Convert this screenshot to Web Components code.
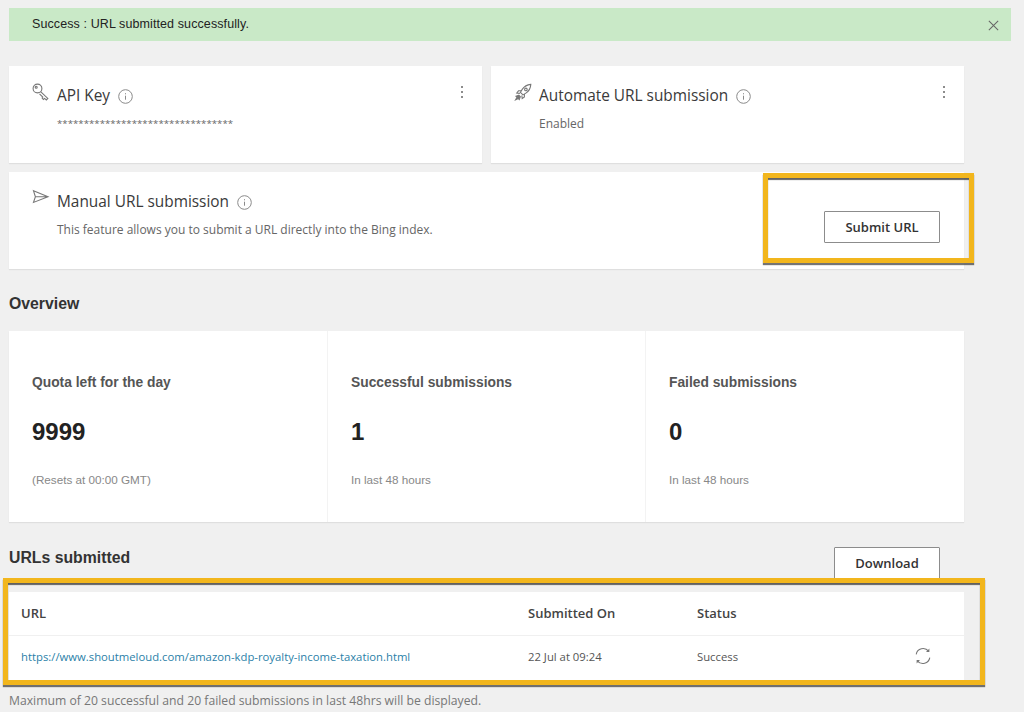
<!DOCTYPE html>
<html lang="en">
<head>
<meta charset="utf-8">
<title>Submit URLs</title>
<style>
  html, body { margin: 0; height: 712px; overflow: hidden; background: #f0f0f0; }
  body { font-family: 'Open Sans', 'Liberation Sans', sans-serif; color: #333; }
  a { color: #2b7fa8; text-decoration: none; }
</style>
</head>
<body>
<submit-page>
  <success-banner>Success : URL submitted successfully.</success-banner>

  <div slot="cards" style="display:grid;grid-template-columns:473px 473px;gap:9px;">
    <tool-card heading="API Key" icon="key" menu>
      <span style="font-size:9.7px;line-height:14px;display:block;padding-top:1px;">*********************************</span>
    </tool-card>
    <tool-card heading="Automate URL submission" icon="rocket" menu>Enabled</tool-card>
  </div>

  <tool-card slot="manual" heading="Manual URL submission" icon="send">
    This feature allows you to submit a URL directly into the Bing index.
    <plain-button slot="action">Submit URL</plain-button>
    <call-out slot="action" style="left:754px;top:1px;width:211px;height:90px;"></call-out>
  </tool-card>

  <section-title slot="overview">Overview</section-title>
  <stat-strip slot="overview">
    <stat-panel label="Quota left for the day" value="9999" note="(Resets at 00:00 GMT)"></stat-panel>
    <stat-panel label="Successful submissions" value="1" note="In last 48 hours"></stat-panel>
    <stat-panel label="Failed submissions" value="0" note="In last 48 hours"></stat-panel>
  </stat-strip>

  <url-table slot="urls">
    <section-title slot="title">URLs submitted</section-title>
    <plain-button slot="tools" tab>Download</plain-button>
    <url-row head>
      <span>URL</span><span>Submitted On</span><span>Status</span><span></span>
    </url-row>
    <url-row>
      <a href="#">https://www.shoutmeloud.com/amazon-kdp-royalty-income-taxation.html</a>
      <span>22 Jul at 09:24</span>
      <span>Success</span>
      <line-icon name="refresh" size="20"></line-icon>
    </url-row>
    <call-out slot="over" style="left:-6px;top:56px;width:982px;height:107px;"></call-out>
    <span slot="foot">Maximum of 20 successful and 20 failed submissions in last 48hrs will be displayed.</span>
  </url-table>
</submit-page>

<script>
const ICONS = {
  key: '<circle cx="5.5" cy="5.5" r="4.4"/><circle cx="4.2" cy="4.2" r="1"/><path d="M8.6 8.6l7.2 6.8-1.5 1.5-1.7-1.5-1.2 1-1.3-1.4.7-1-3.300-3.200"/>',
  rocket: '<path d="M16.8 1.4c-3.600.3-6.600 2-8.600 5L6.400 9.300l2.600 2.600 2.900-1.800c3-1.900 4.700-4.900 4.900-8.700z"/><circle cx="11.900" cy="6.400" r="1.300"/><path d="M7.400 7.800H4.500L2.800 10l3.100.4M10.400 11v2.900l-2.200 1.700-.4-3.100"/><path d="M4.800 12.200l-2.800 1.100 1 1-1.400 2.500 2.700-1.300 1 1 1-2.800z" fill="currentColor"/>',
  send: '<path d="M1.500 1.800L16 7.800 1.500 13.400 3.400 7.800zM3.400 7.800H16"/>',
  refresh: '<path d="M3.200 8.300A7 7 0 0 1 15.600 5.200"/><path d="M16.800 11.700A7 7 0 0 1 4.400 14.800"/><path d="M16.400 2.400v3.500h-3.400z" fill="currentColor" stroke="none"/><path d="M3.600 17.600v-3.500H7z" fill="currentColor" stroke="none"/>',
  close: '<path d="M2 2l10 10M12 2L2 12"/>'
};

class LineIcon extends HTMLElement {
  static get observedAttributes() { return ['name']; }
  constructor() {
    super();
    this.attachShadow({ mode: 'open' });
  }
  attributeChangedCallback() {
    const name = this.getAttribute('name');
    const size = this.getAttribute('size') || 18;
    const box = name == 'refresh' ? 20 : name == 'close' ? 14 : 18;
    this.shadowRoot.innerHTML = `
      <style>
        :host { display: inline-flex; color: #777; }
        svg { display: block; fill: none; stroke: currentColor; stroke-width: 1.1; }
      </style>
      <svg width="${size}" height="${size}" viewBox="0 0 ${box} ${box}">${ICONS[name]}</svg>`;
  }
}
customElements.define('line-icon', LineIcon);

const infoTemplate = document.createElement('template');
infoTemplate.innerHTML = `
  <style>
    :host { display: inline-flex; width: 15px; height: 15px; }
    svg { display: block; }
  </style>
  <svg width="15" height="15" viewBox="0 0 15 15" fill="none" stroke="#8a8a8a" stroke-width="1">
    <circle cx="7.5" cy="7.5" r="6.8"/>
    <path d="M7.5 6.7v4"/>
    <path d="M7.5 4.2v1.100"/>
  </svg>`;

class InfoMark extends HTMLElement {
  constructor() {
    super();
    this.attachShadow({ mode: 'open' }).appendChild(infoTemplate.content.cloneNode(true));
  }
}
customElements.define('info-mark', InfoMark);

const pageTemplate = document.createElement('template');
pageTemplate.innerHTML = `
  <style>
    :host { display: block; padding: 8px 13px 0 9px; }
    .content { padding-right: 47px; }
    .cards { margin-top: 25px; }
    .manual { margin-top: 9px; }
  </style>
  <slot></slot>
  <div class="content">
    <div class="cards"><slot name="cards"></slot></div>
    <div class="manual"><slot name="manual"></slot></div>
    <slot name="overview"></slot>
    <slot name="urls"></slot>
  </div>`;

class SubmitPage extends HTMLElement {
  constructor() {
    super();
    this.attachShadow({ mode: 'open' }).appendChild(pageTemplate.content.cloneNode(true));
  }
}
customElements.define('submit-page', SubmitPage);

const bannerTemplate = document.createElement('template');
bannerTemplate.innerHTML = `
  <style>
    :host {
      display: flex;
      align-items: center;
      justify-content: space-between;
      height: 33px;
      padding: 0 11px 0 23px;
      background: #c9e9c7;
      color: #222;
      font-family: 'Liberation Sans', sans-serif;
      font-size: 12.5px;
      letter-spacing: 0.1px;
    }
    span { position: relative; top: -1px; }
    line-icon { color: #666; position: relative; top: 1px; }
  </style>
  <span><slot></slot></span>
  <line-icon name="close" size="13"></line-icon>`;

class SuccessBanner extends HTMLElement {
  constructor() {
    super();
    this.attachShadow({ mode: 'open' }).appendChild(bannerTemplate.content.cloneNode(true));
  }
}
customElements.define('success-banner', SuccessBanner);

const cardTemplate = document.createElement('template');
cardTemplate.innerHTML = `
  <style>
    :host {
      display: block;
      position: relative;
      box-sizing: border-box;
      height: 97px;
      padding: 17px 14px 0 23px;
      background: #fff;
      box-shadow: 0 1px 1px rgba(0,0,0,0.07);
    }
    .top { display: grid; grid-template-columns: 25px 1fr 12px; }
    h3 {
      display: flex;
      align-items: center;
      gap: 8px;
      margin: 0;
      padding-top: 2px;
      font-size: 15.4px;
      line-height: 22px;
      font-weight: 400;
      color: #3a3a3a;
    }
    .menu { display: flex; flex-direction: column; gap: 3px; padding: 3px 0 0 5px; }
    .menu i { width: 2px; height: 2px; border-radius: 50%; background: #666; }
    .body {
      margin: 9px 0 0 25px;
      font-size: 12px;
      line-height: 15px;
      color: #666;
    }
  </style>
  <div class="top">
    <line-icon></line-icon>
    <h3><span id="heading"></span><info-mark></info-mark></h3>
    <div class="menu"><i></i><i></i><i></i></div>
  </div>
  <div class="body"><slot></slot></div>
  <slot name="action"></slot>`;

class ToolCard extends HTMLElement {
  constructor() {
    super();
    this.attachShadow({ mode: 'open' }).appendChild(cardTemplate.content.cloneNode(true));
  }
  connectedCallback() {
    this.shadowRoot.querySelector('#heading').textContent = this.getAttribute('heading');
    this.shadowRoot.querySelector('line-icon').setAttribute('name', this.getAttribute('icon'));
    if (!this.hasAttribute('menu')) {
      this.shadowRoot.querySelector('.menu').style.visibility = 'hidden';
    }
  }
}
customElements.define('tool-card', ToolCard);

const buttonTemplate = document.createElement('template');
buttonTemplate.innerHTML = `
  <style>
    :host {
      position: absolute;
      right: 24px;
      bottom: 26px;
      display: flex;
      align-items: center;
      justify-content: center;
      box-sizing: border-box;
      width: 116px;
      height: 32px;
      background: #fff;
      border: 1px solid #8c8c8c;
      border-radius: 1px;
      font-size: 13px;
      font-weight: 600;
      color: #333;
    }
    :host([tab]) {
      bottom: auto;
      width: 106px;
    }
  </style>
  <slot></slot>`;

class PlainButton extends HTMLElement {
  constructor() {
    super();
    this.attachShadow({ mode: 'open' }).appendChild(buttonTemplate.content.cloneNode(true));
  }
}
customElements.define('plain-button', PlainButton);

const calloutTemplate = document.createElement('template');
calloutTemplate.innerHTML = `
  <style>
    :host {
      position: absolute;
      box-sizing: border-box;
      border: 5px solid #f2b61d;
      box-shadow: 0 2px 1px rgba(70,70,70,0.75);
      pointer-events: none;
    }
    .edge { position: absolute; inset: 0; box-shadow: inset 0 2px 1px rgba(60,60,60,0.8); }
  </style>
  <div class="edge"></div>`;

class CallOut extends HTMLElement {
  constructor() {
    super();
    this.attachShadow({ mode: 'open' }).appendChild(calloutTemplate.content.cloneNode(true));
  }
}
customElements.define('call-out', CallOut);

const titleTemplate = document.createElement('template');
titleTemplate.innerHTML = `
  <style>
    :host {
      display: block;
      font-family: 'Liberation Sans', sans-serif;
      font-size: 15.8px;
      line-height: 20px;
      font-weight: 700;
      color: #333;
    }
    :host([slot="overview"]) { padding: 25px 0 17px; }
    :host([slot="title"]) { padding-top: 1px; }
  </style>
  <slot></slot>`;

class SectionTitle extends HTMLElement {
  constructor() {
    super();
    this.attachShadow({ mode: 'open' }).appendChild(titleTemplate.content.cloneNode(true));
  }
}
customElements.define('section-title', SectionTitle);

const stripTemplate = document.createElement('template');
stripTemplate.innerHTML = `
  <style>
    :host {
      display: grid;
      grid-template-columns: 318px 318px 319px;
      height: 191px;
      background: #fff;
      box-shadow: 0 1px 1px rgba(0,0,0,0.07);
    }
  </style>
  <slot></slot>`;

class StatStrip extends HTMLElement {
  constructor() {
    super();
    this.attachShadow({ mode: 'open' }).appendChild(stripTemplate.content.cloneNode(true));
  }
}
customElements.define('stat-strip', StatStrip);

const statTemplate = document.createElement('template');
statTemplate.innerHTML = `
  <style>
    :host {
      display: block;
      padding: 43px 0 0 24px;
      font-family: 'Liberation Sans', sans-serif;
      box-shadow: inset 1px 0 0 #f3f3f3;
    }
    :host(:first-child) { padding-left: 23px; box-shadow: none; }
    .label { font-size: 13.8px; line-height: 18px; font-weight: 700; color: #555; }
    .value { margin-top: 27px; font-size: 24px; line-height: 26px; font-weight: 700; color: #222; }
    .note { margin-top: 28px; font-size: 11.7px; line-height: 14px; color: #888; }
  </style>
  <div class="label"></div>
  <div class="value"></div>
  <div class="note"></div>`;

class StatPanel extends HTMLElement {
  constructor() {
    super();
    this.attachShadow({ mode: 'open' }).appendChild(statTemplate.content.cloneNode(true));
  }
  connectedCallback() {
    for (const key of ['label', 'value', 'note']) {
      this.shadowRoot.querySelector('.' + key).textContent = this.getAttribute(key);
    }
  }
}
customElements.define('stat-panel', StatPanel);

const tableTemplate = document.createElement('template');
tableTemplate.innerHTML = `
  <style>
    :host { display: block; position: relative; }
    .bar { position: relative; height: 70px; padding-top: 25px; box-sizing: border-box; }
    .rows { background: #fff; }
    .foot {
      margin-top: 14px;
      font-size: 12.2px;
      line-height: 14px;
      color: #777;
    }
    .bar ::slotted(plain-button) { top: 25px; }
  </style>
  <div class="bar"><slot name="title"></slot><slot name="tools"></slot></div>
  <div class="rows"><slot></slot></div>
  <div class="foot"><slot name="foot"></slot></div>
  <slot name="over"></slot>`;

class UrlTable extends HTMLElement {
  constructor() {
    super();
    this.attachShadow({ mode: 'open' }).appendChild(tableTemplate.content.cloneNode(true));
  }
}
customElements.define('url-table', UrlTable);

const rowTemplate = document.createElement('template');
rowTemplate.innerHTML = `
  <style>
    :host {
      display: grid;
      grid-template-columns: 507px 169px 1fr 20px;
      align-items: center;
      box-sizing: border-box;
      height: 44px;
      padding: 0 31px 4px 12px;
      font-size: 11.3px;
      color: #555;
    }
    :host([head]) {
      padding-bottom: 2px;
      border-bottom: 1px solid #f0f0f0;
      font-size: 13px;
      font-weight: 600;
      color: #444;
    }
  </style>
  <slot></slot>`;

class UrlRow extends HTMLElement {
  constructor() {
    super();
    this.attachShadow({ mode: 'open' }).appendChild(rowTemplate.content.cloneNode(true));
  }
}
customElements.define('url-row', UrlRow);
</script>
</body>
</html>
